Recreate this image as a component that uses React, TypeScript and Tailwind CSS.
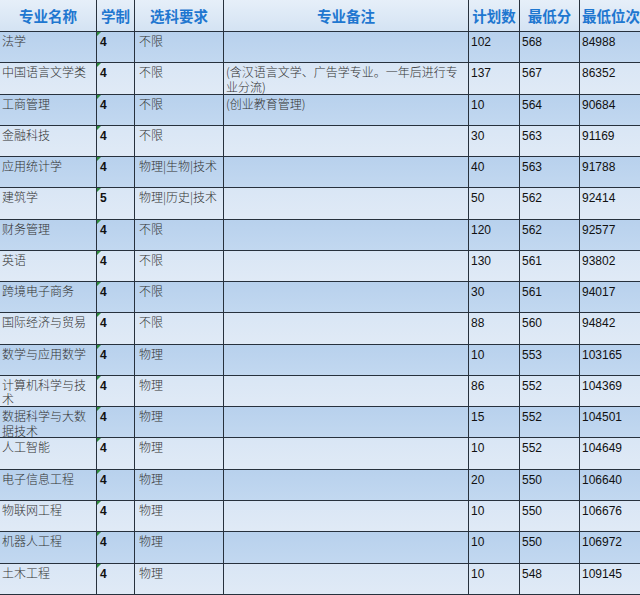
import React from "react";

type Row = [string, string, string, string, string, string, string];

const rows: Row[] = [
  ["法学", "4", "不限", "", "102", "568", "84988"],
  ["中国语言文学类", "4", "不限", "(含汉语言文学、广告学专业。一年后进行专\n业分流)", "137", "567", "86352"],
  ["工商管理", "4", "不限", "(创业教育管理)", "10", "564", "90684"],
  ["金融科技", "4", "不限", "", "30", "563", "91169"],
  ["应用统计学", "4", "物理|生物|技术", "", "40", "563", "91788"],
  ["建筑学", "5", "物理|历史|技术", "", "50", "562", "92414"],
  ["财务管理", "4", "不限", "", "120", "562", "92577"],
  ["英语", "4", "不限", "", "130", "561", "93802"],
  ["跨境电子商务", "4", "不限", "", "30", "561", "94017"],
  ["国际经济与贸易", "4", "不限", "", "88", "560", "94842"],
  ["数学与应用数学", "4", "物理", "", "10", "553", "103165"],
  ["计算机科学与技\n术", "4", "物理", "", "86", "552", "104369"],
  ["数据科学与大数\n据技术", "4", "物理", "", "15", "552", "104501"],
  ["人工智能", "4", "物理", "", "10", "552", "104649"],
  ["电子信息工程", "4", "物理", "", "20", "550", "106640"],
  ["物联网工程", "4", "物理", "", "10", "550", "106676"],
  ["机器人工程", "4", "物理", "", "10", "550", "106972"],
  ["土木工程", "4", "物理", "", "10", "548", "109145"],
];

const headers = ["专业名称", "学制", "选科要求", "专业备注", "计划数", "最低分", "最低位次"];

const cjk = "font-['Noto_Sans_CJK_SC',sans-serif]";
const num = "font-['Liberation_Sans','Noto_Sans_CJK_SC',sans-serif]";

function Lines({ text }: { text: string }) {
  const parts = text.split("\n");
  return (
    <>
      {parts.map((p, i) => (
        <div key={i} className="whitespace-nowrap">
          {p}
        </div>
      ))}
    </>
  );
}

export default function App() {
  return (
    <div className="w-[640px] h-[595px] overflow-hidden bg-[#dde8f5]">
      <div className="w-[645px]">
        <div className="grid grid-cols-[97px_38px_89px_245px_51px_60px_65px] h-[32px] border-b border-[#27313d] bg-gradient-to-b from-[#e6eff9] to-[#d4e3f3]">
          {headers.map((h, i) => (
            <div
              key={h}
              className={`flex items-center ${i === 6 ? "justify-start pl-[2px]" : "justify-center"} ${i < 6 ? "border-r border-[#27313d]" : ""} ${cjk} text-[14.5px] font-bold text-[#1f77d0] whitespace-nowrap overflow-hidden`}
            >
              {h}
            </div>
          ))}
        </div>
        {rows.map((r, idx) => {
          const dark = idx % 2 === 0;
          return (
            <div
              key={idx}
              className={`grid grid-cols-[97px_38px_89px_245px_51px_60px_65px] h-[31.28px] border-b border-[#27313d] ${dark ? "bg-gradient-to-b from-[#b8d1ed] to-[#c2d8f0]" : "bg-gradient-to-b from-[#d9e6f5] to-[#e0eaf6]"}`}
            >
              <div className={`border-r border-[#27313d] pl-[2px] pt-[2px] ${cjk} font-light text-[12px] leading-[14.5px] text-[#333]`}>
                <Lines text={r[0]} />
              </div>
              <div className={`relative border-r border-[#27313d] pl-[3px] pt-[3px] ${num} font-bold text-[12px] leading-[14px] text-[#111]`}>
                <span className="absolute left-0 top-0 w-0 h-0 border-t-[4px] border-r-[4px] border-t-[#2d8a3c] border-r-transparent" />
                {r[1]}
              </div>
              <div className={`border-r border-[#27313d] pl-[4px] pt-[2px] ${cjk} font-light text-[12px] leading-[14.5px] text-[#333]`}>
                {r[2]}
              </div>
              <div className={`border-r border-[#27313d] pl-[2px] pt-[2px] ${cjk} font-light text-[12px] leading-[14.5px] text-[#333]`}>
                <Lines text={r[3]} />
              </div>
              <div className={`border-r border-[#27313d] pl-[2px] pt-[3px] ${num} text-[12px] leading-[14px] text-[#111]`}>
                {r[4]}
              </div>
              <div className={`border-r border-[#27313d] pl-[2px] pt-[3px] ${num} text-[12px] leading-[14px] text-[#111]`}>
                {r[5]}
              </div>
              <div className={`pl-[2px] pt-[3px] ${num} text-[12px] leading-[14px] text-[#111]`}>
                {r[6]}
              </div>
            </div>
          );
        })}
      </div>
    </div>
  );
}
